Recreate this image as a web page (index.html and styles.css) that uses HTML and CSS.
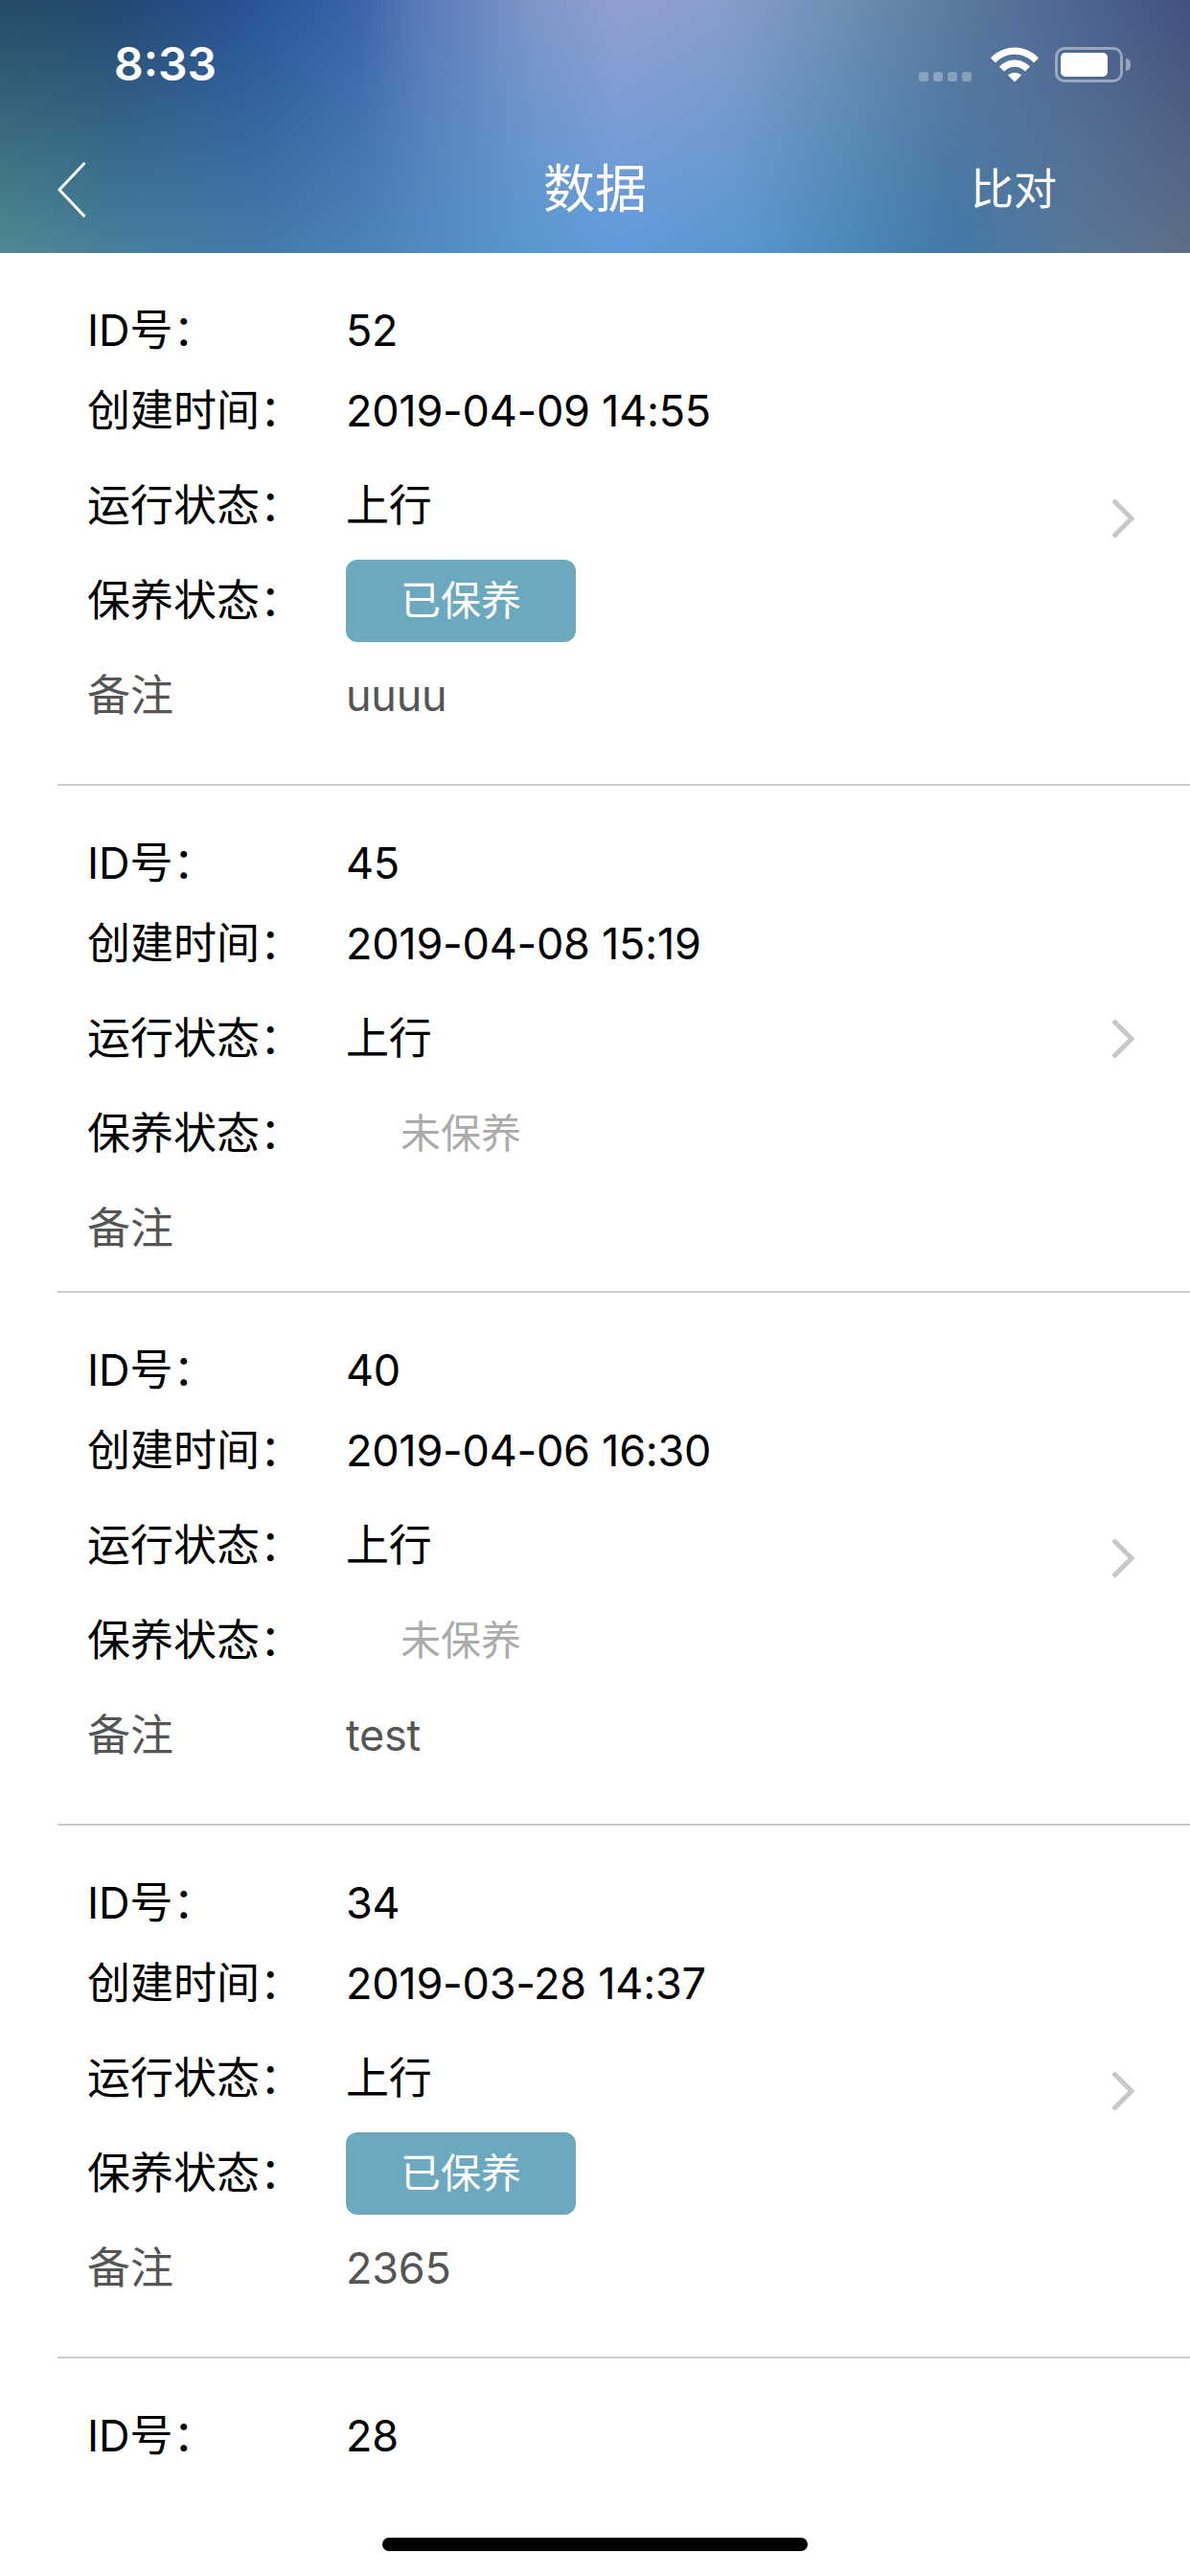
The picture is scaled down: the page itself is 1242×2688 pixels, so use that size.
FILE: index.html
```html
<!DOCTYPE html>
<html lang="zh-CN">
<head>
<meta charset="utf-8">
<title>数据</title>
<link rel="stylesheet" href="styles.css">
</head>
<body>
<div class="phone">
  <header class="header">
    <div class="status">
      <span class="time">8:33</span>
      <div class="status-icons">
        <div class="signal"><i></i><i></i><i></i><i></i></div>
        <svg class="wifi" width="50" height="37" viewBox="0 0 50 37"><path fill="#fff" d="M0 11.500C6.500 4.500 15.500 0.500 25 0.500S43.500 4.500 50 11.500L45 16.500C39.700 11 32.500 7.800 25 7.800S10.300 11 5 16.500Z"/><path fill="#fff" d="M9 20.500C13 16.300 18.800 13.500 25 13.500S37 16.300 41 20.500L36 25.500C33 22.600 29.200 20.800 25 20.800S17 22.600 14 25.500Z"/><path fill="#fff" d="M18 29.500C20 27.800 22.300 26.800 25 26.800S30 27.800 32 29.500L25 36.500Z"/></svg>
        <div class="battery"><div class="battery-body"><div class="battery-fill"></div></div><div class="battery-cap"></div></div>
      </div>
    </div>
    <nav class="nav">
      <svg class="back" width="30" height="58" viewBox="0 0 30 58"><path d="M28.500 1L2 29L28.500 57" fill="none" stroke="#fff" stroke-width="3"/></svg>
      <h1 class="title">数据</h1>
      <span class="action">比对</span>
    </nav>
  </header>
  <main class="list">
    <article class="item">
      <div class="info">
        <div class="row row-id"><span class="label">ID号：</span><span class="value">52</span></div>
        <div class="row"><span class="label">创建时间：</span><span class="value">2019-04-09 14:55</span></div>
        <div class="row"><span class="label">运行状态：</span><span class="value">上行</span></div>
        <div class="row"><span class="label">保养状态：</span><span class="tag tag-done">已保养</span></div>
        <div class="row row-note"><span class="label">备注</span><span class="value note">uuuu</span></div>
      </div>
      <svg class="chevron" width="26" height="42" viewBox="0 0 26 42"><path d="M3 2L22 21L3 40" fill="none" stroke="#c7c7cc" stroke-width="5"/></svg>
    </article>
    <article class="item">
      <div class="info">
        <div class="row row-id"><span class="label">ID号：</span><span class="value">45</span></div>
        <div class="row"><span class="label">创建时间：</span><span class="value">2019-04-08 15:19</span></div>
        <div class="row"><span class="label">运行状态：</span><span class="value">上行</span></div>
        <div class="row"><span class="label">保养状态：</span><span class="tag">未保养</span></div>
        <div class="row row-note"><span class="label">备注</span></div>
      </div>
      <svg class="chevron" width="26" height="42" viewBox="0 0 26 42"><path d="M3 2L22 21L3 40" fill="none" stroke="#c7c7cc" stroke-width="5"/></svg>
    </article>
    <article class="item">
      <div class="info">
        <div class="row row-id"><span class="label">ID号：</span><span class="value">40</span></div>
        <div class="row"><span class="label">创建时间：</span><span class="value">2019-04-06 16:30</span></div>
        <div class="row"><span class="label">运行状态：</span><span class="value">上行</span></div>
        <div class="row"><span class="label">保养状态：</span><span class="tag">未保养</span></div>
        <div class="row row-note"><span class="label">备注</span><span class="value note">test</span></div>
      </div>
      <svg class="chevron" width="26" height="42" viewBox="0 0 26 42"><path d="M3 2L22 21L3 40" fill="none" stroke="#c7c7cc" stroke-width="5"/></svg>
    </article>
    <article class="item">
      <div class="info">
        <div class="row row-id"><span class="label">ID号：</span><span class="value">34</span></div>
        <div class="row"><span class="label">创建时间：</span><span class="value">2019-03-28 14:37</span></div>
        <div class="row"><span class="label">运行状态：</span><span class="value">上行</span></div>
        <div class="row"><span class="label">保养状态：</span><span class="tag tag-done">已保养</span></div>
        <div class="row row-note"><span class="label">备注</span><span class="value note">2365</span></div>
      </div>
      <svg class="chevron" width="26" height="42" viewBox="0 0 26 42"><path d="M3 2L22 21L3 40" fill="none" stroke="#c7c7cc" stroke-width="5"/></svg>
    </article>
    <article class="item">
      <div class="info">
        <div class="row row-id"><span class="label">ID号：</span><span class="value">28</span></div>
      </div>
    </article>
  </main>
  <div class="home-bar"></div>
</div>
</body>
</html>
```
FILE: styles.css
```css
* { box-sizing: border-box; }
html, body { margin: 0; padding: 0; }
body {
  background: #fff;
  font-family: Inter, "Noto Sans CJK SC", sans-serif;
  color: #000;
}
.phone {
  position: relative;
  width: 1242px;
  height: 2688px;
  overflow: hidden;
  background: #fff;
}
.header {
  position: relative;
  height: 264px;
  color: #fff;
  background: linear-gradient(to right,
    #4f8a92 0%, #47809e 10%, #457bab 22%, #4c82b8 30%, #5a98d2 45%, #609bdc 52%,
    #5a97d2 62%, #4a88b8 72%, #4379a8 80%, #57789a 90%, #5f6e88 100%);
}
.header::before {
  content: "";
  position: absolute;
  inset: 0;
  background: linear-gradient(to right,
    #234a66 0%, #22486f 10%, #285094 20%, #2e5a9e 25%, #3a62a8 30%, #5878b8 35%, #7f96c8 45%,
    #939fd0 52%, #8a9ecc 60%, #7090b4 70%, #5c7a9e 80%, #4e6690 90%, #42507f 100%);
  -webkit-mask-image: linear-gradient(to bottom, #000 0%, transparent 100%);
  mask-image: linear-gradient(to bottom, #000 0%, transparent 100%);
}
.status {
  position: relative;
  height: 132px;
  padding: 38px 62px 0 119px;
  display: flex;
  justify-content: space-between;
  align-items: flex-start;
}
.time {
  font-size: 48px;
  line-height: 58px;
  font-weight: 600;
}
.status-icons {
  display: flex;
  align-items: flex-start;
  padding-top: 11px;
}
.signal {
  display: flex;
  gap: 5px;
  margin-top: 26px;
  margin-right: 20px;
}
.signal i {
  width: 10px;
  height: 10px;
  border-radius: 3px;
  background: rgba(255,255,255,0.3);
}
.wifi { margin-right: 17px; }
.battery {
  display: flex;
  align-items: center;
  height: 37px;
}
.battery-body {
  width: 71px;
  height: 37px;
  border: 3px solid rgba(255,255,255,0.42);
  border-radius: 10px;
  padding: 3px 13px 3px 3px;
}
.battery-fill {
  height: 25px;
  background: #fff;
  border-radius: 5px;
}
.battery-cap {
  width: 5px;
  height: 13px;
  margin-left: 3px;
  background: rgba(255,255,255,0.42);
  border-radius: 0 6px 6px 0;
}
.nav {
  height: 132px;
  position: relative;
  display: flex;
  align-items: center;
  justify-content: space-between;
  padding: 0 139px 0 60px;
}
.back { display: block; }
.title {
  margin: 0;
  position: absolute;
  left: 0;
  right: 0;
  top: 31px;
  text-align: center;
  font-size: 54px;
  line-height: 70px;
  font-weight: 400;
}
.action {
  font-size: 45px;
  line-height: 60px;
}
.list {
  height: 2326px;
  overflow: hidden;
}
.item {
  margin-left: 60px;
  padding: 56px 57px 40px 31px;
  display: flex;
  align-items: center;
  justify-content: space-between;
  border-bottom: 2px solid #cdcdd0;
}
.chevron { margin-bottom: 16px; }
.info {
  display: flex;
  flex-direction: column;
  gap: 49px;
}
.row {
  display: flex;
  align-items: flex-start;
  font-size: 45px;
  line-height: 50px;
}
.row-id { margin-bottom: -15px; }
.label { width: 270px; flex: none; }
.value { letter-spacing: -0.25px; }
.note { color: #555; padding-bottom: 27px; }
.row-note { color: #555; }
.tag {
  width: 240px;
  height: 86px;
  margin: -18px 0;
  border-radius: 12px;
  display: flex;
  align-items: center;
  justify-content: center;
  font-size: 42px;
  color: #ababab;
}
.tag-done {
  background: #6ca9bf;
  color: #fff;
}
.home-bar {
  position: absolute;
  left: 399px;
  top: 2648px;
  width: 444px;
  height: 14px;
  border-radius: 7px;
  background: #000;
}
```
